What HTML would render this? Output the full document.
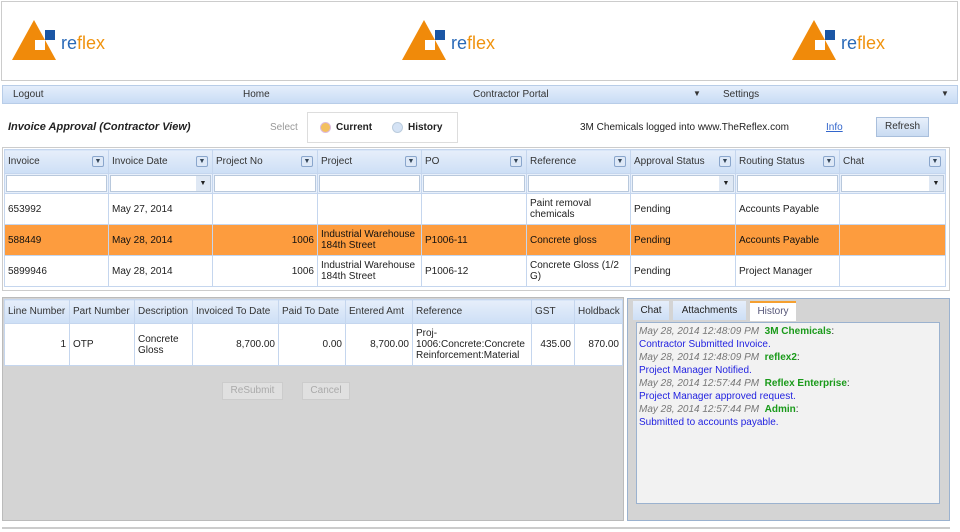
<!DOCTYPE html><html><head><style>
*{box-sizing:border-box}body{margin:0;width:960px;height:532px;background:#fff;font-family:"Liberation Sans",sans-serif;font-size:10px;color:#222;position:relative;overflow:hidden}
.a{position:absolute}
.logo{position:absolute;top:18px;width:110px;height:44px}
.menu{left:2px;top:85px;width:956px;height:19px;background:linear-gradient(#e4eefb,#c9dcf5);border:1px solid #b8cde8}
.menu span{position:absolute;top:3px;font-size:10px;color:#333}
table{border-collapse:collapse;position:absolute;table-layout:fixed}
td{border:1px solid #c5d6ee;padding:0 3px;vertical-align:middle;overflow:hidden;font-size:10px}
.h td{background:linear-gradient(#e6eefa,#cddff6);height:24px;color:#333;position:relative;white-space:nowrap}
.dd{position:absolute;right:4px;top:6px;width:12px;height:11px;border:1px solid #8aa6cc;border-radius:2px;background:#dde8f7;font-size:7px;line-height:9px;text-align:center;color:#345}
.f td{height:20px;background:#e8f0fb;padding:1px}
.f div{height:17px;background:#fff;border:1px solid #b8c8dc;position:relative}
.f i{position:absolute;right:0;top:0;width:14px;height:15px;background:#dfe8f4;font-style:normal;font-size:7px;text-align:center;line-height:15px}
.r td{height:31px;background:#fff;line-height:11px}
.o td{background:#fd9c3e;color:#111}
.num{text-align:right}
.hist{color:#777;font-style:italic}.g{color:#1a9a1a;font-weight:bold}.b{color:#1f1fe0}
</style></head><body>
<div class="a" style="left:1px;top:1px;width:957px;height:80px;border:1px solid #ccc"></div>
<svg class="logo" style="left:12px" viewBox="0 0 110 44"><polygon points="0,42 22,2 44,42" fill="#f08a0a"/><rect x="23" y="22" width="10" height="10" fill="#fff"/><rect x="33" y="12" width="10" height="10" fill="#1b56a5"/><text x="49" y="31" font-family="Liberation Sans" font-size="18" fill="#2a6ab8">re<tspan fill="#f0930f">flex</tspan></text></svg>
<svg class="logo" style="left:402px" viewBox="0 0 110 44"><polygon points="0,42 22,2 44,42" fill="#f08a0a"/><rect x="23" y="22" width="10" height="10" fill="#fff"/><rect x="33" y="12" width="10" height="10" fill="#1b56a5"/><text x="49" y="31" font-family="Liberation Sans" font-size="18" fill="#2a6ab8">re<tspan fill="#f0930f">flex</tspan></text></svg>
<svg class="logo" style="left:792px" viewBox="0 0 110 44"><polygon points="0,42 22,2 44,42" fill="#f08a0a"/><rect x="23" y="22" width="10" height="10" fill="#fff"/><rect x="33" y="12" width="10" height="10" fill="#1b56a5"/><text x="49" y="31" font-family="Liberation Sans" font-size="18" fill="#2a6ab8">re<tspan fill="#f0930f">flex</tspan></text></svg>
<div class="a menu"><span style="left:10px">Logout</span><span style="left:240px">Home</span><span style="left:470px">Contractor Portal</span><span style="left:690px;font-size:8px">▼</span><span style="left:720px">Settings</span><span style="left:938px;font-size:8px">▼</span></div>
<div class="a" style="left:8px;top:121px;font-weight:bold;font-style:italic;font-size:11px">Invoice Approval (Contractor View)</div>
<div class="a" style="left:270px;top:122px;color:#999">Select</div>
<div class="a" style="left:307px;top:112px;width:151px;height:31px;border:1px solid #ddd"></div>
<div class="a" style="left:320px;top:122px;width:11px;height:11px;border-radius:50%;background:#f3c060;border:1px solid #dbd"></div>
<div class="a" style="left:336px;top:122px;font-weight:bold">Current</div>
<div class="a" style="left:392px;top:122px;width:11px;height:11px;border-radius:50%;background:#d5e3f5;border:1px solid #bcd"></div>
<div class="a" style="left:408px;top:122px;font-weight:bold">History</div>
<div class="a" style="left:580px;top:122px">3M Chemicals logged into www.TheReflex.com</div>
<div class="a" style="left:826px;top:122px;color:#3366cc;text-decoration:underline">Info</div>
<div class="a" style="left:876px;top:117px;width:53px;height:20px;background:linear-gradient(#e8f0fb,#c9dbf2);border:1px solid #a9bfdc;text-align:center;line-height:18px;color:#333">Refresh</div>
<div class="a" style="left:2px;top:147px;width:948px;height:144px;border:1px solid #ccc"></div>
<table style="left:4px;top:149px;width:941px">
<colgroup><col style="width:104px"><col style="width:104px"><col style="width:105px"><col style="width:104px"><col style="width:105px"><col style="width:104px"><col style="width:105px"><col style="width:104px"><col style="width:106px"></colgroup>
<tr class="h"><td>Invoice<span class="dd">▼</span></td><td>Invoice Date<span class="dd">▼</span></td><td>Project No<span class="dd">▼</span></td><td>Project<span class="dd">▼</span></td><td>PO<span class="dd">▼</span></td><td>Reference<span class="dd">▼</span></td><td>Approval Status<span class="dd">▼</span></td><td>Routing Status<span class="dd">▼</span></td><td>Chat<span class="dd">▼</span></td></tr>
<tr class="f"><td><div></div></td><td><div><i>▼</i></div></td><td><div></div></td><td><div></div></td><td><div></div></td><td><div></div></td><td><div><i>▼</i></div></td><td><div></div></td><td><div><i>▼</i></div></td></tr>
<tr class="r"><td>653992</td><td>May 27, 2014</td><td></td><td></td><td></td><td>Paint removal chemicals</td><td>Pending</td><td>Accounts Payable</td><td></td></tr>
<tr class="r o"><td>588449</td><td>May 28, 2014</td><td class="num">1006</td><td>Industrial Warehouse 184th Street</td><td>P1006-11</td><td>Concrete gloss</td><td>Pending</td><td>Accounts Payable</td><td></td></tr>
<tr class="r"><td>5899946</td><td>May 28, 2014</td><td class="num">1006</td><td>Industrial Warehouse 184th Street</td><td>P1006-12</td><td>Concrete Gloss (1/2 G)</td><td>Pending</td><td>Project Manager</td><td></td></tr>
</table>
<div class="a" style="left:2px;top:297px;width:622px;height:224px;background:#d4d4d4;border:1px solid #bbb"></div>
<table style="left:4px;top:299px;width:618px">
<colgroup><col style="width:65px"><col style="width:65px"><col style="width:58px"><col style="width:86px"><col style="width:67px"><col style="width:67px"><col style="width:119px"><col style="width:43px"><col style="width:48px"></colgroup>
<tr class="h"><td style="height:21px">Line Number</td><td>Part Number</td><td>Description</td><td>Invoiced To Date</td><td>Paid To Date</td><td>Entered Amt</td><td>Reference</td><td>GST</td><td>Holdback</td></tr>
<tr class="r"><td class="num" style="height:42px">1</td><td>OTP</td><td>Concrete Gloss</td><td class="num">8,700.00</td><td class="num">0.00</td><td class="num">8,700.00</td><td>Proj-1006:Concrete:Concrete Reinforcement:Material</td><td class="num">435.00</td><td class="num">870.00</td></tr>
</table>
<div class="a" style="left:222px;top:382px;width:61px;height:18px;background:#e0e0e0;border:1px solid #ccc;color:#aaa;text-align:center;line-height:16px">ReSubmit</div>
<div class="a" style="left:302px;top:382px;width:48px;height:18px;background:#e0e0e0;border:1px solid #ccc;color:#aaa;text-align:center;line-height:16px">Cancel</div>
<div class="a" style="left:627px;top:298px;width:323px;height:223px;background:#d4d4d4;border:1px solid #9bb2cf"></div>
<div class="a" style="left:633px;top:301px;width:36px;height:19px;background:linear-gradient(#e6eefa,#cddff6);text-align:center;line-height:19px">Chat</div>
<div class="a" style="left:673px;top:301px;width:73px;height:19px;background:linear-gradient(#e6eefa,#cddff6);text-align:center;line-height:19px">Attachments</div>
<div class="a" style="left:750px;top:301px;width:46px;height:20px;background:#fff;border-top:2px solid #f5a030;text-align:center;line-height:17px;color:#557">History</div>
<div class="a" style="left:636px;top:322px;width:304px;height:182px;background:#f2f2f2;border:1px solid #9bb2cf;padding:2px 2px;line-height:13px">
<div><span class="hist">May 28, 2014 12:48:09 PM</span> &nbsp;<span class="g">3M Chemicals</span>:</div><div class="b">Contractor Submitted Invoice.</div>
<div><span class="hist">May 28, 2014 12:48:09 PM</span> &nbsp;<span class="g">reflex2</span>:</div><div class="b">Project Manager Notified.</div>
<div><span class="hist">May 28, 2014 12:57:44 PM</span> &nbsp;<span class="g">Reflex Enterprise</span>:</div><div class="b">Project Manager approved request.</div>
<div><span class="hist">May 28, 2014 12:57:44 PM</span> &nbsp;<span class="g">Admin</span>:</div><div class="b">Submitted to accounts payable.</div>
</div>
<div class="a" style="left:2px;top:527px;width:948px;height:2px;background:#ccc"></div>
</body></html>
